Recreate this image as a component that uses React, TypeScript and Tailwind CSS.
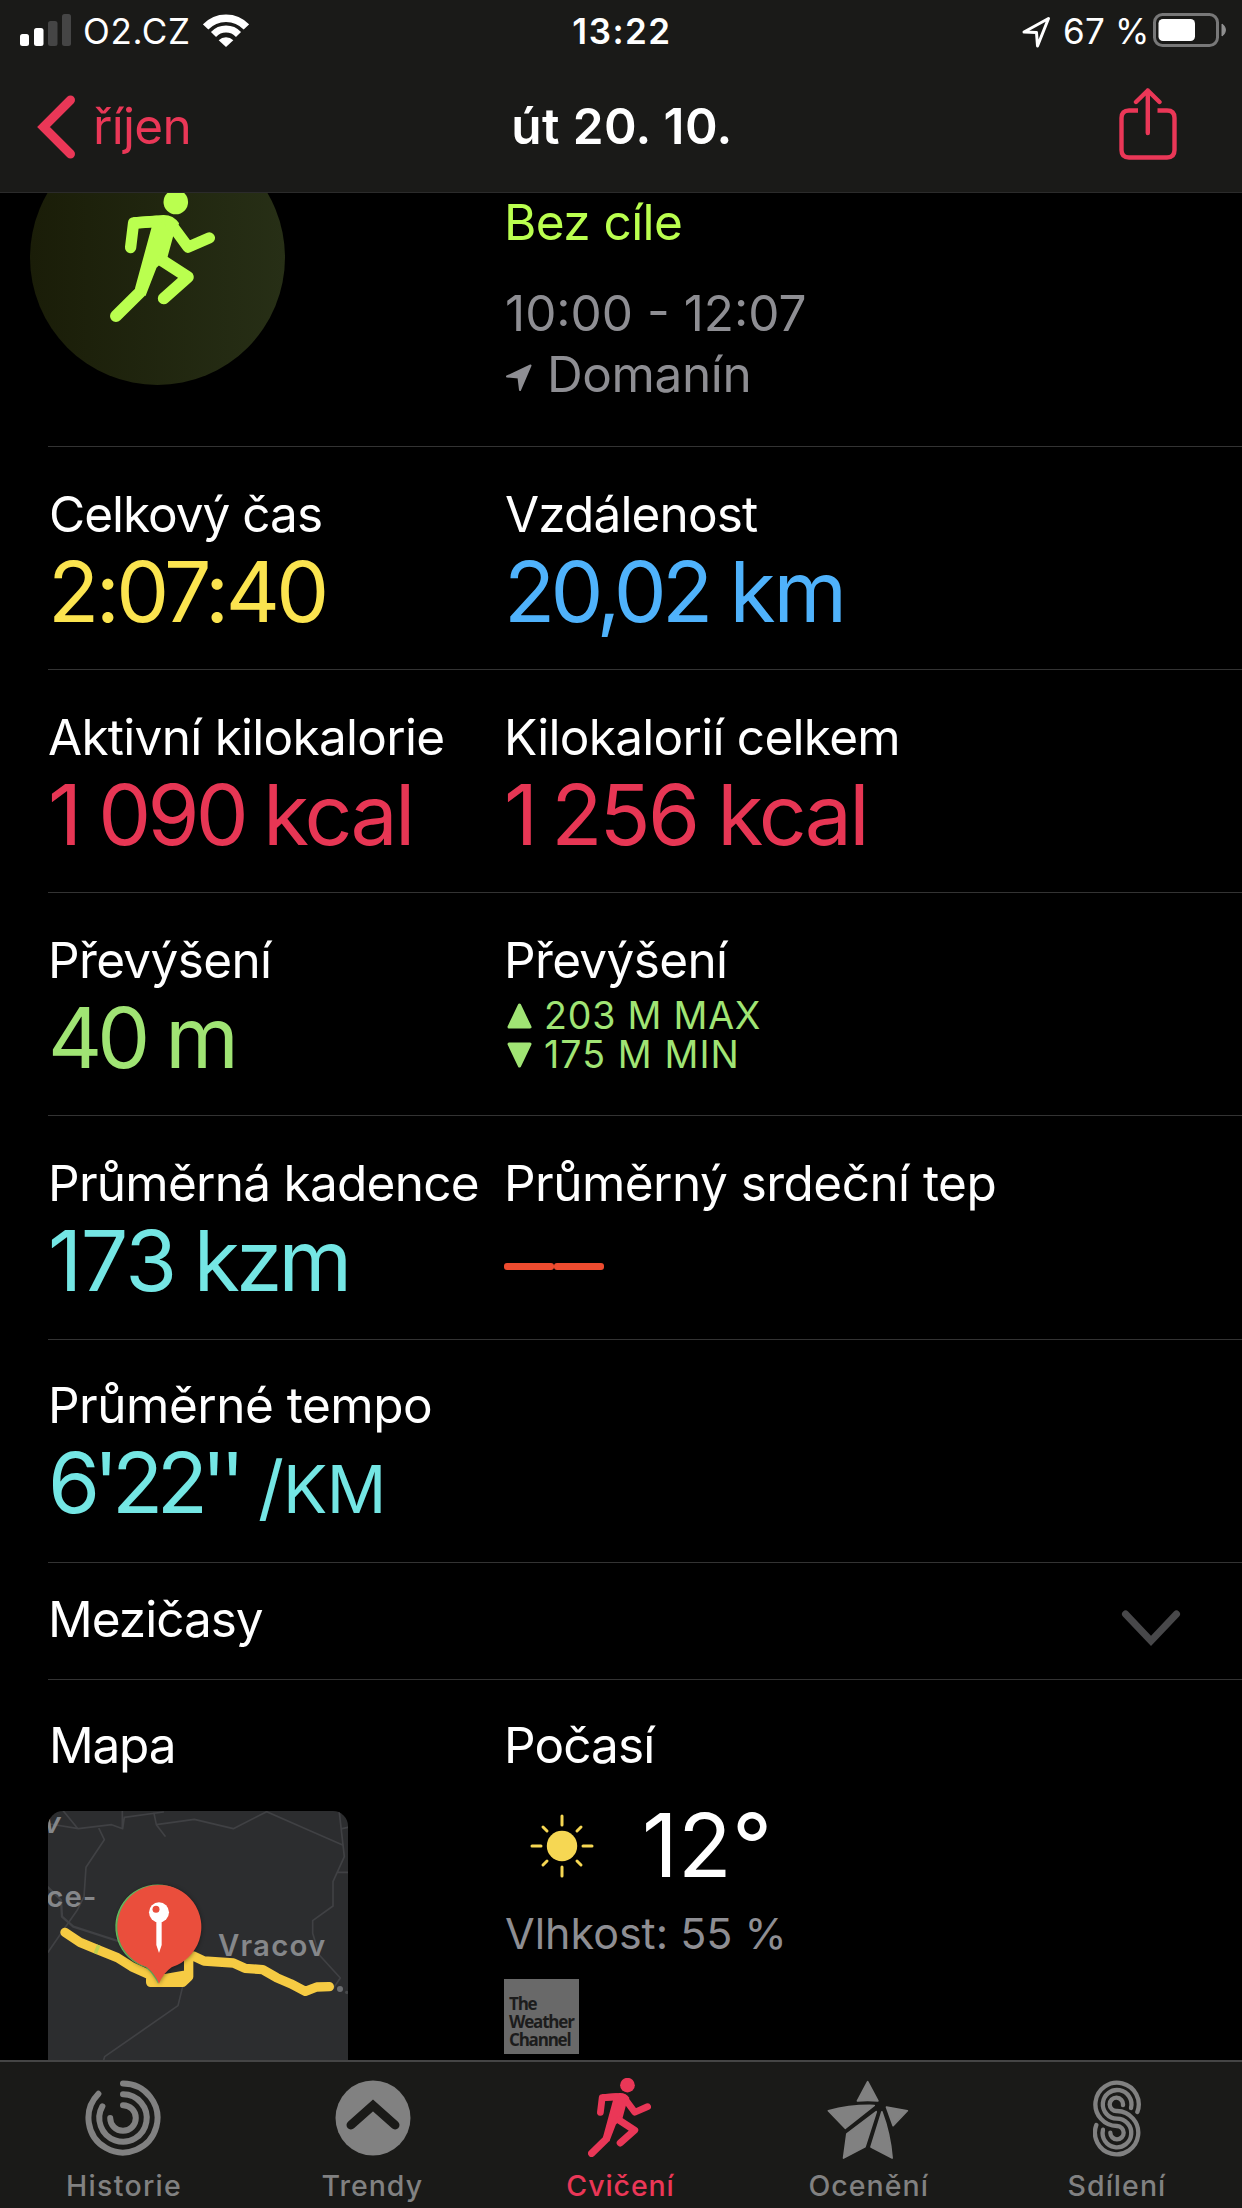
import { clsx } from 'clsx'
import type { ReactNode } from 'react'

interface Metric {
  label: string
  labelClass?: string
  color?: string
  number?: string
  numberClass?: string
  unit?: string
  unitClass?: string
  content?: ReactNode
}

const METRICS: Metric[][] = [
  [
    { label: 'Celkový čas', labelClass: 'pl-px tracking-[-1px]', color: 'text-[#fbe44f]', number: '2:07:40', numberClass: 'tracking-[-3.6px]' },
    { label: 'Vzdálenost', labelClass: 'pl-px tracking-[-0.85px]', color: 'text-[#4fb2fb]', number: '20,02', numberClass: 'tracking-[-4.8px]', unit: 'km', unitClass: 'ml-[21px] tracking-[-2px]' },
  ],
  [
    { label: 'Aktivní kilokalorie', color: 'text-[#e73654]', number: '1 090', numberClass: 'tracking-[-3.8px]', unit: 'kcal', unitClass: 'ml-[18px] tracking-[-2.7px]' },
    { label: 'Kilokalorií celkem', color: 'text-[#e73654]', number: '1 256', numberClass: 'tracking-[-2.8px] [word-spacing:-5px]', unit: 'kcal', unitClass: 'ml-[20px] tracking-[-2.7px]' },
  ],
  [
    { label: 'Převýšení', labelClass: 'tracking-[-0.65px]', color: 'text-[#a0e474]', number: '40', numberClass: 'tracking-[-5px]', unit: 'm', unitClass: 'ml-[20px]' },
    { label: 'Převýšení', labelClass: 'tracking-[-0.65px]', content: <Elevation /> },
  ],
  [
    { label: 'Průměrná kadence', color: 'text-[#74e6e4]', number: '173', numberClass: 'tracking-[-1.5px]', unit: 'kzm', unitClass: 'ml-[18px] tracking-[-3.8px]' },
    { label: 'Průměrný srdeční tep', labelClass: 'tracking-[-0.53px]', content: <NoValue /> },
  ],
  [{ label: 'Průměrné tempo', labelClass: 'tracking-[-0.49px]', content: <Pace /> }],
]

const TABS = [
  { label: 'Historie', icon: <RingsIcon />, labelClass: 'tracking-[1.3px]' },
  { label: 'Trendy', icon: <TrendsIcon />, labelClass: 'tracking-[1px]' },
  { label: 'Cvičení', icon: <Runner className="h-[79px] w-[63px] translate-x-[-1px] translate-y-[-1px]" />, labelClass: 'tracking-[0.9px]', active: true },
  { label: 'Ocenění', icon: <StarIcon />, labelClass: 'tracking-[1.05px]' },
  { label: 'Sdílení', icon: <SharingIcon />, labelClass: 'tracking-[1.05px]' },
]

function Runner({ className }: { className?: string }) {
  return (
    <svg viewBox="330 26 316 397" className={className} fill="none" stroke="currentColor" strokeLinecap="round" strokeLinejoin="round">
      <circle cx="528" cy="62" r="37" fill="currentColor" stroke="none" />
      <path
        d="M400 108 L490 101 Q520 100 538 126 L520 166 L503 228 L470 260 L437 345 L405 322 L455 139 L400 143 Z"
        fill="currentColor"
        stroke="none"
      />
      <path d="M392 199 L401 125 L470 120" strokeWidth="34" />
      <path d="M512 126 L565 198 L629 170" strokeWidth="34" />
      <path d="M487 238 L564 288 L492 352" strokeWidth="36" />
      <path d="M421 333 L348 405" strokeWidth="36" />
    </svg>
  )
}

function RingsIcon() {
  return (
    <svg viewBox="-38 -38 76 76" className="size-19 translate-x-[-1px]" fill="none" stroke="currentColor" strokeWidth="6" strokeLinecap="round">
      <path d="M0 -34.5 A34.5 34.5 0 1 1 -24.6 -24.2" />
      <path d="M0 -23.7 A23.7 23.7 0 1 1 -20.6 -11.7" />
      <path d="M0 -12.8 A12.8 12.8 0 1 1 -12.8 0" />
    </svg>
  )
}

function TrendsIcon() {
  return (
    <svg viewBox="-38 -38 76 76" className="size-19 translate-x-px">
      <circle r="37.5" fill="currentColor" />
      <path d="M-22 7 L0 -12.5 L22 7" fill="none" stroke="#1a1a18" strokeWidth="9" strokeLinecap="round" />
    </svg>
  )
}

function StarIcon() {
  return (
    <svg viewBox="18 28 248 242" className="h-[80px] w-[82px] translate-x-[-1px] translate-y-[2px]" fill="currentColor" stroke="currentColor" strokeWidth="5" strokeLinejoin="round">
      <path d="M141 33 L172 91 Q141 88 110 91 Z" />
      <path d="M22 121 Q90 103 161 105 L73 174 Z" />
      <path d="M167 124 L133 230 L68 264 L78 191 Z" />
      <path d="M184 124 Q209 190 215 264 L151 231 Z" />
      <path d="M198 110 L261 121 L218 166 Z" />
    </svg>
  )
}

function SharingIcon() {
  return (
    <svg viewBox="819 28 144 231" className="h-[77px] w-12" fill="none" stroke="currentColor" strokeWidth="13" strokeLinecap="round">
      <path d="M952 124 A65 65 0 1 0 891 166 A20 20 0 1 1 871 186" />
      <path d="M933 112 A43 43 0 1 0 891 144 A43 43 0 1 1 849 177" />
      <path d="M909 103 A20 20 0 1 0 891 121 A65 65 0 1 1 829 163" />
    </svg>
  )
}

function StatusBar() {
  return (
    <div className="grid h-[62px] grid-cols-[1fr_auto_1fr] items-center text-[35px]">
      <div className="flex items-center pl-5">
        <svg viewBox="0 0 51 32" className="mt-[-2px] h-8 w-[51px]" fill="#ffffff">
          <rect x="0" y="20" width="9" height="12" rx="2.5" />
          <rect x="14" y="14" width="9.5" height="18" rx="2.5" />
          <rect x="28" y="7" width="9.5" height="25" rx="2.5" fill="#454545" />
          <rect x="42" y="0" width="9" height="32" rx="2.5" fill="#454545" />
        </svg>
        <span className="ml-3 w-[120px] tracking-[0.7px]">O2.CZ</span>
        <svg viewBox="0 0 46 34" className="mt-[-2px] h-[34px] w-[46px]" fill="none" stroke="#ffffff">
          <path d="M2.6 14 A28 28 0 0 1 43.4 14" strokeWidth="7.5" />
          <path d="M10.5 21.5 A17.2 17.2 0 0 1 35.5 21.5" strokeWidth="7" />
          <path d="M23 34 L15.7 27.3 A10.5 10.5 0 0 1 30.3 27.3 Z" fill="#ffffff" stroke="none" />
        </svg>
      </div>
      <span className="pl-[2px] font-semibold tracking-[1.5px]">13:22</span>
      <div className="flex items-center justify-end pr-4">
        <svg viewBox="0 0 29 33" className="h-[33px] w-[29px]" fill="none" stroke="#ffffff" strokeWidth="3" strokeLinejoin="round">
          <path d="M2 17 L26.5 3.5 L15.5 31 L14.5 17.5 Z" />
        </svg>
        <span className="ml-3 w-[90px] whitespace-nowrap tracking-[0.2px]">67 %</span>
        <svg viewBox="0 0 73 34" className="mt-[-2px] h-[34px] w-[73px]">
          <rect x="1.5" y="1.5" width="63" height="31" rx="8" fill="none" stroke="#787878" strokeWidth="3" />
          <rect x="5.5" y="6" width="36.5" height="22" rx="4.5" fill="#ffffff" />
          <path d="M69 11 A7 7 0 0 1 69 23 Z" fill="#8f8f8f" stroke="#8f8f8f" />
        </svg>
      </div>
    </div>
  )
}

function NavBar() {
  return (
    <div className="grid flex-1 grid-cols-[1fr_auto_1fr] items-center pb-px text-[49.5px]">
      <button className="flex items-center pl-[37px] text-[#ea3757]">
        <svg viewBox="0 0 38 64" className="h-16 w-[38px]" fill="none" stroke="currentColor" strokeWidth="9" strokeLinecap="round">
          <path d="M33.5 5 L6.5 32 L33.5 59" />
        </svg>
        <span className="ml-[18px] tracking-[-0.7px]">říjen</span>
      </button>
      <h1 className="pl-[2px] font-semibold tracking-[0.4px]">út 20. 10.</h1>
      <button className="justify-self-end pr-[65px] text-[#ea3757]">
        <svg viewBox="0 0 58 72" className="mt-[-6px] h-[72px] w-[58px]" fill="none" stroke="currentColor" strokeWidth="4.4">
          <path d="M19 22.5 H10 Q2.5 22.5 2.5 30 V62 Q2.5 69.5 10 69.5 H48 Q55.5 69.5 55.5 62 V30 Q55.5 22.5 48 22.5 H38.5" />
          <path d="M28.8 2.5 V45 M17 14 L28.8 2.5 L40.5 14" strokeLinecap="round" strokeLinejoin="round" />
        </svg>
      </button>
    </div>
  )
}

function Elevation() {
  return (
    <div className="mt-[6px] pl-[3px] text-[37.5px] leading-[39px] text-[#a0e474]">
      <p className="flex items-center">
        <svg viewBox="0 0 25 26" className="mr-[12px] h-[26px] w-[25px]" fill="currentColor" stroke="currentColor" strokeWidth="3" strokeLinejoin="round">
          <path d="M12.5 2 L23 24 H2 Z" />
        </svg>
        <span className="tracking-[0.8px]">203 M MAX</span>
      </p>
      <p className="flex items-center">
        <svg viewBox="0 0 25 26" className="mr-[12px] h-[26px] w-[25px]" fill="currentColor" stroke="currentColor" strokeWidth="3" strokeLinejoin="round">
          <path d="M12.5 24 L23 2 H2 Z" />
        </svg>
        <span className="tracking-[1.1px]">175 M MIN</span>
      </p>
    </div>
  )
}

function NoValue() {
  return (
    <div className="mt-[50px] flex">
      <span className="h-[7px] w-[50px] rounded-[3px] bg-[#ed4b2f]" />
      <span className="h-[7px] w-[50px] rounded-[3px] bg-[#ed4b2f]" />
    </div>
  )
}

function Pace() {
  return (
    <p className="mt-px flex items-baseline whitespace-nowrap text-[84px] leading-[93px] text-[#74e6e4]">
      <span className="w-[210px] tracking-[-6.6px]">6'22''</span>
      <span className="w-[25px] text-[72px]">/</span>
      <span className="text-[66px] tracking-[-0.5px]">KM</span>
    </p>
  )
}

function MetricCell({ label, labelClass = 'tracking-[-0.73px]', color, number, numberClass, unit, unitClass, content }: Metric) {
  return (
    <div>
      <h2 className={clsx('whitespace-nowrap text-[49.5px] leading-[60px]', labelClass)}>{label}</h2>
      {content ?? (
        <p className={clsx('mt-px flex whitespace-nowrap text-[84px] leading-[93px]', color)}>
          <span className={numberClass}>{number}</span>
          {unit && <span className={unitClass}>{unit}</span>}
        </p>
      )}
    </div>
  )
}

function RouteMap() {
  return (
    <svg viewBox="144 33 900 750" className="mt-9 h-[250px] w-[300px] rounded-t-[15px] bg-[#2c2d2f]" fill="none" strokeLinejoin="round" strokeLinecap="round">
      <g stroke="#404144" strokeWidth="5">
        <path d="M190 33 L232 84 M150 72 L235 86 L335 74 L368 86 L373 52 L490 36 M367 33 V84" />
        <path d="M462 40 L469 74 L495 108 M469 74 L583 58 L700 86 L800 35 L930 92 L1028 135" />
        <path d="M297 86 L313 119 L258 202 L252 290 L232 330 L190 390 L144 457" />
        <path d="M144 262 L183 300 L186 350 L220 380 L400 438" strokeWidth="7" />
        <path d="M1018 38 L1033 170 L999 245 V318 L938 362 V400 L958 465 L1021 534 L1000 565 M1026 86 L1044 82 M1012 217 H1044" />
        <path d="M548 560 L534 617 L314 770 L310 783" />
      </g>
      <g fill="#85878a" fontFamily="Inter, sans-serif" fontWeight="600" fontSize="88">
        <text x="132" y="98" fontStyle="italic" fontSize="84">v</text>
        <text x="139" y="321" letterSpacing="3">ce-</text>
        <text x="654" y="469" letterSpacing="3.6">Vracov</text>
      </g>
      <path
        d="M195 397 L240 427 L300 452 L352 473 L395 500 L452 526 V547 H548 L566 530 V473 L580 468 L612 483 L700 489 L735 505 L788 509 L830 533 L872 551 L916 574 L950 561 L988 560 M470 540 L505 534 L552 526"
        stroke="#f6cb43"
        strokeWidth="28"
      />
      <path d="M286 446 L296 450" stroke="#bfd04f" strokeWidth="27" strokeLinecap="butt" />
      <circle cx="1020" cy="567" r="9" fill="#6b6d70" />
      <circle cx="1040" cy="577" r="5" fill="#47494b" />
      <path d="M477 551 Q462 521 439 502 A127 127 0 1 1 513 502 Q492 519 477 551 Z" fill="#74cf6b" transform="translate(-3 0)" />
      <path
        d="M477 551 Q465 521 440 501 A126 126 0 1 1 516 501 Q489 519 477 551 Z"
        fill="#ea4e3c"
        className="drop-shadow-[0_2px_6px_rgba(0,0,0,0.45)]"
      />
      <circle cx="477" cy="337" r="30" fill="#ffffff" />
      <path d="M469 360 H485 V435 L477 459 L469 435 Z" fill="#ffffff" />
      <circle cx="468" cy="328" r="10.5" fill="#ea4e3c" />
    </svg>
  )
}

function SunIcon() {
  return (
    <svg viewBox="-32 -32 64 64" className="size-16 translate-y-px" stroke="#f6d753" strokeWidth="3" strokeLinecap="round">
      <circle r="15.2" fill="#f6d753" stroke="none" />
      <path d="M0 -30 V-21 M0 21 V30 M-30 0 H-21 M21 0 H30 M-19 -19 L-15 -15 M19 -19 L15 -15 M-19 19 L-15 15 M19 19 L15 15" />
    </svg>
  )
}

function Weather() {
  return (
    <div>
      <h2 className="text-[49.5px] leading-[60px] tracking-[-0.9px]">Počasí</h2>
      <div className="mt-6 flex items-center pl-[26px]">
        <SunIcon />
        <span className="ml-[48px] text-[88px] leading-[92px] tracking-[0.3px]">12°</span>
      </div>
      <p className="mt-[14px] pl-px text-[43px] leading-[57px] text-[#8e8e93]">Vlhkost: 55 %</p>
      <div className="mt-[17px] flex h-[75px] w-[75px] flex-col justify-end bg-[#696969] pb-[5px] pl-[5px] font-['Open_Sans',sans-serif] text-[17px] leading-[18px] font-bold tracking-[-1.2px] text-[#1c1c1c]">
        <span>The</span>
        <span>Weather</span>
        <span>Channel</span>
      </div>
    </div>
  )
}

function App() {
  return (
    <div className="flex h-[2208px] w-[1242px] flex-col overflow-hidden bg-black font-[Inter,sans-serif] text-white">
      <header className="flex h-[193px] flex-col border-b border-[#2b2b2b] bg-[#1a1a18]">
        <StatusBar />
        <NavBar />
      </header>

      <main className="min-h-0 flex-1 overflow-hidden pl-12">
        {/* Workout summary, partly scrolled under the header */}
        <section className="grid h-[254px] grid-cols-[456px_1fr] border-b border-[#333333]">
          <div className="mt-[-63px] ml-[-18px] flex size-[255px] items-center justify-center rounded-full bg-linear-to-r from-[#1a1d08] to-[#272f16] text-[#baff4f]">
            <Runner className="ml-[10px] h-[132px] w-[105px] translate-y-[-2px]" />
          </div>
          <div className="mt-[-1px] text-[49.5px] leading-[60px] text-[#8e8e93]">
            <p className="tracking-[-0.58px] text-[#baff4f]">Bez cíle</p>
            <p className="mt-[31px] pl-px">10:00 - 12:07</p>
            <p className="mt-px flex items-center pl-[2px] tracking-[-0.4px]">
              <svg viewBox="0 0 26 27" className="mt-[6px] mr-[15px] h-[27px] w-[26px]" fill="currentColor" stroke="currentColor" strokeWidth="2" strokeLinejoin="round">
                <path d="M1 12.5 L24.5 1.5 L14 26 L12.5 13.5 Z" />
              </svg>
              Domanín
            </p>
          </div>
        </section>

        {METRICS.map((row, i) => (
          <section
            key={i}
            className={clsx(
              'grid grid-cols-[456px_1fr] border-b border-[#333333]',
              i === METRICS.length - 1 ? 'h-[223px] pt-[35px]' : i === METRICS.length - 2 ? 'h-[224px] pt-[37px]' : 'h-[223px] pt-[37px]',
            )}
          >
            {row.map((m, j) => (
              <MetricCell key={j} {...m} />
            ))}
          </section>
        ))}

        <section className="flex h-[117px] items-center justify-between border-b border-[#333333] pr-[61px] pb-[3px]">
          <h2 className="text-[49.5px] tracking-[-1px]">Mezičasy</h2>
          <svg viewBox="0 0 60 38" className="mt-[16px] h-[38px] w-[60px]" fill="none" stroke="#48484a" strokeWidth="7" strokeLinecap="round">
            <path d="M4.5 5 L30 32 L55.5 5" />
          </svg>
        </section>

        <section className="grid grid-cols-[456px_1fr] pt-[35px]">
          <div>
            <h2 className="pl-px text-[49.5px] leading-[60px] tracking-[-1.2px]">Mapa</h2>
            <RouteMap />
          </div>
          <Weather />
        </section>
      </main>

      <nav className="flex h-[148px] border-t-2 border-[#454545] bg-[#1a1a18] pr-px">
        {TABS.map((tab) => (
          <button
            key={tab.label}
            className={clsx('flex flex-1 flex-col items-center pt-[18px]', tab.active ? 'text-[#ea3757]' : 'text-[#818181]')}
          >
            <span className="flex h-[76px] items-center">{tab.icon}</span>
            <span className={clsx('mt-[10px] text-[28.5px] leading-[40px] font-medium', tab.labelClass)}>{tab.label}</span>
          </button>
        ))}
      </nav>
    </div>
  )
}

export default App
